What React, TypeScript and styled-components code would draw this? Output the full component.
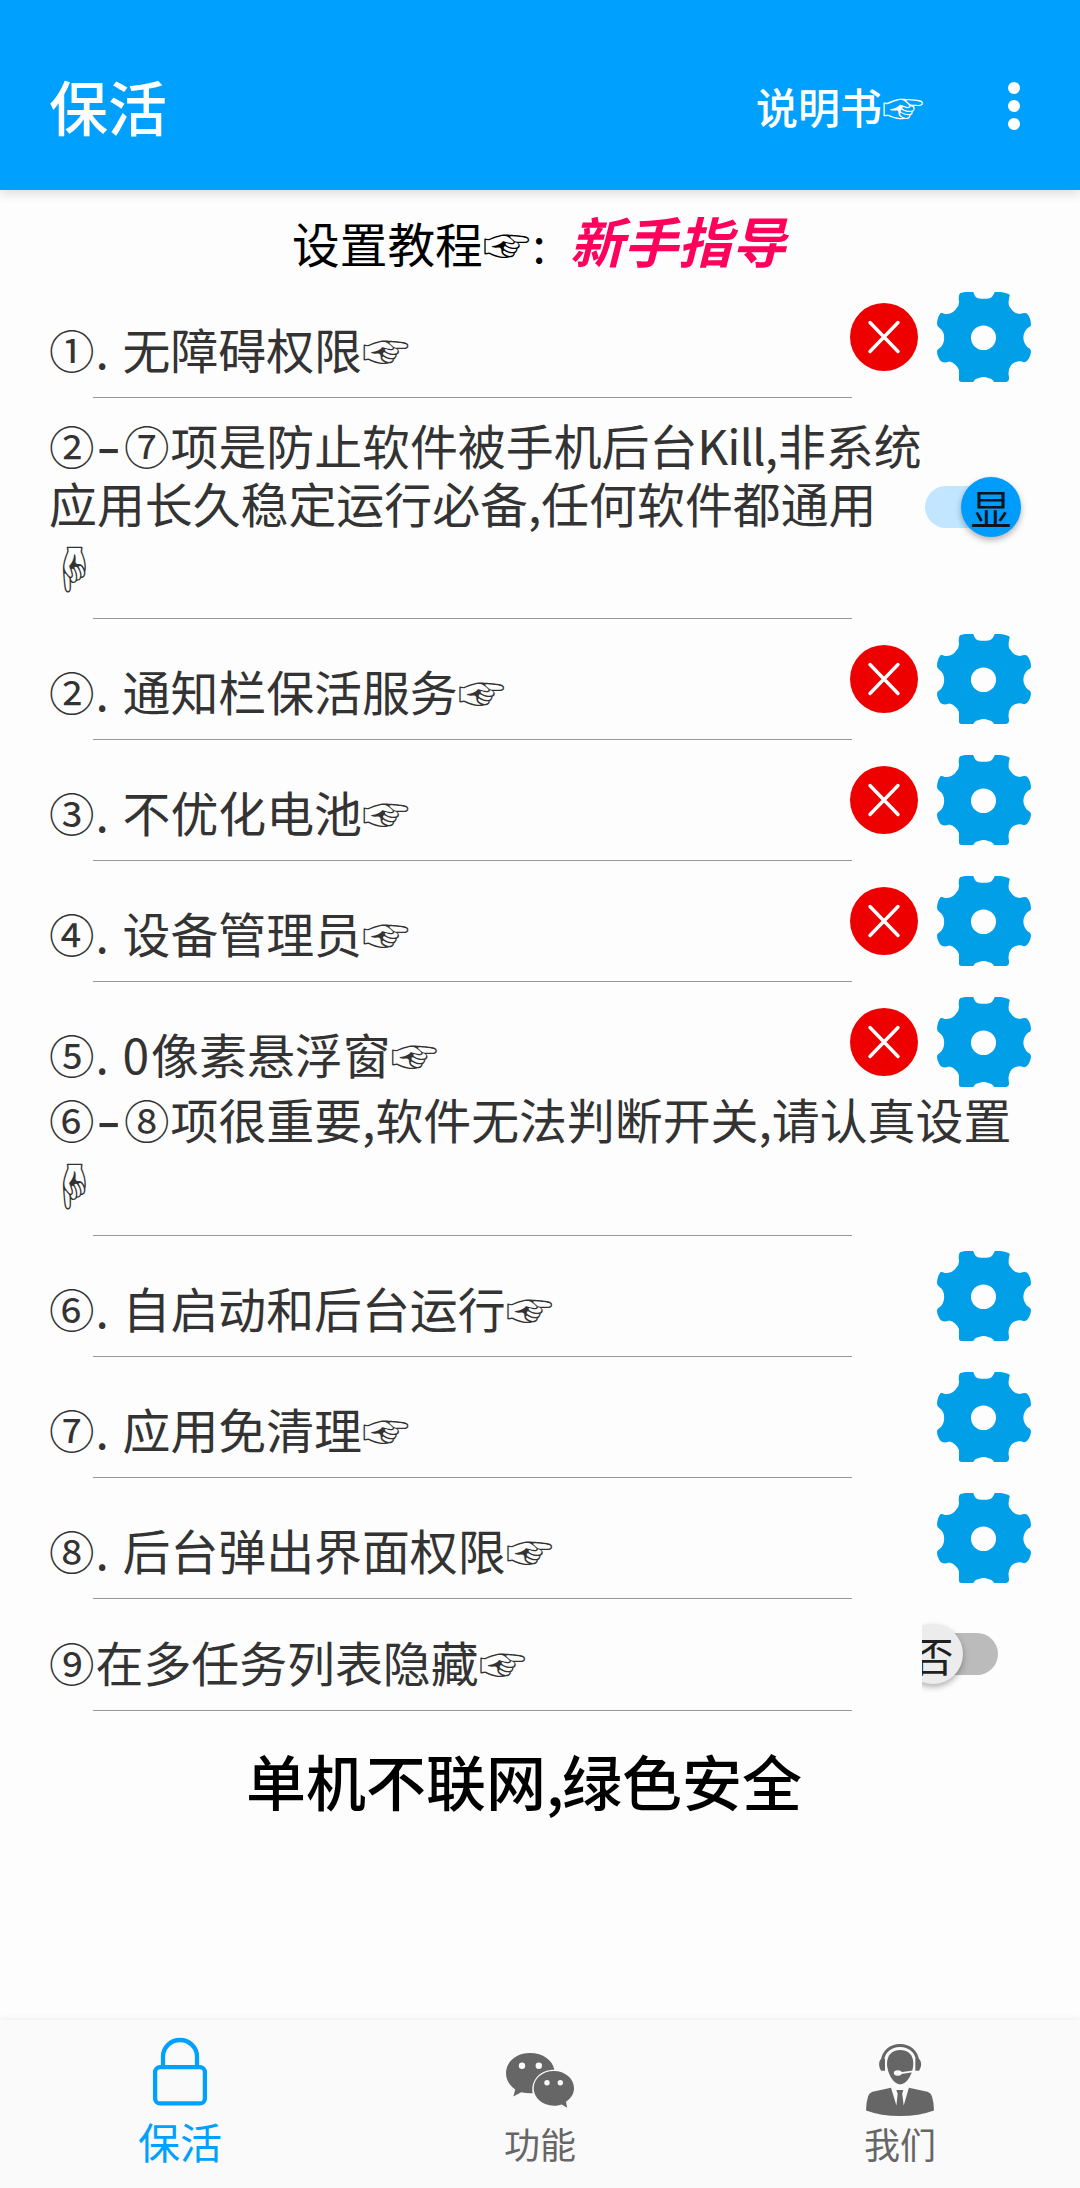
import React from "react";
import styled, { createGlobalStyle } from "styled-components";

const sans = `"Noto Sans CJK SC", "DejaVu Sans", sans-serif`;

const Global = createGlobalStyle`
  * { box-sizing: border-box; }
  body { margin: 0; background: #fdfdfd; font-family: ${sans}; }
`;

const Screen = styled.div`
  display: flex;
  flex-direction: column;
  width: 1080px;
  height: 2188px;
  background: #fdfdfd;
  overflow: hidden;
`;

const Header = styled.header`
  flex: none;
  display: flex;
  align-items: center;
  height: 190px;
  padding: 22px 60px 0 49px;
  background: #00a0ff;
  color: #fff;
  box-shadow: 0 4px 10px rgba(0, 0, 0, 0.12);
`;

const Title = styled.h1`
  flex: 1;
  margin: 0;
  font-size: 59px;
  font-weight: 500;
  line-height: 80px;
`;

const Manual = styled.span`
  display: flex;
  align-items: baseline;
  font-size: 42px;
  font-weight: 500;
  line-height: 60px;
  margin-right: 84px;
`;

const Dots = styled.div`
  display: flex;
  flex-direction: column;
  gap: 6px;
  width: 12px;
`;

const Dot = styled.i`
  width: 12px;
  height: 12px;
  border-radius: 50%;
  background: #fff;
`;

const HandBox = styled.span<{ $size: number }>`
  display: inline-block;
  width: ${(p) => p.$size}px;
  font-family: "Noto Sans CJK JP", "DejaVu Sans", sans-serif;
  font-weight: 400;
  font-size: ${(p) => p.$size}px;
  line-height: 1;
  white-space: nowrap;
`;

const Guide = styled.div`
  flex: none;
  display: flex;
  align-items: baseline;
  height: 87px;
  padding: 15px 0 0 292px;
  font-size: 47.7px;
  line-height: 70px;
  color: #000;
`;

const Colon = styled.span`
  padding-left: 2px;
`;

const GuideLink = styled.b`
  margin-left: 24px;
  color: #ff005c;
  font-size: 54px;
  font-style: italic;
  font-weight: 700;
  line-height: 70px;
`;

const Item = styled.section<{ $h: number; $line?: boolean }>`
  flex: none;
  display: grid;
  grid-template-columns: minmax(0, 1fr) 68px 95px;
  column-gap: 18px;
  height: ${(p) => p.$h}px;
  padding: 0 49px;
  background: ${(p) =>
    p.$line === false ? "none" : "linear-gradient(#999, #999) 93px 100% / 759px 1px no-repeat"};
`;

const Label = styled.div<{ $top: number }>`
  padding-top: ${(p) => p.$top}px;
  color: #333;
  font-size: 47.9px;
  line-height: 57px;
  white-space: nowrap;
`;

const Num = styled.span`
  display: inline-block;
  width: 46.5px;
  font-size: 45.5px;
`;

const Stop = styled.span`
  display: inline-block;
  width: 27px;
`;

const Dash = styled.span`
  display: inline-flex;
  justify-content: center;
  width: 28.5px;
  font-weight: 500;
  transform: translateX(-1.5px) scaleX(1.45);
`;

const Latin = styled.span<{ $gap: number }>`
  letter-spacing: ${(p) => p.$gap}px;
`;

const Slot = styled.div`
  padding-top: 15px;
  height: 105px;
  display: flex;
  align-items: center;
`;

const Note = styled.div`
  flex: none;
  height: 146px;
  margin-top: -8px;
  padding: 0 49px;
  color: #333;
  font-size: 47.9px;
  line-height: 57px;
  white-space: nowrap;
  background: linear-gradient(#999, #999) 93px 100% / 759px 1px no-repeat;
`;

const HandLine = styled.div`
  line-height: 73px;
`;

const SwitchBox = styled.div<{ $on: boolean; $top: number }>`
  grid-column: 2 / 4;
  justify-self: end;
  display: flex;
  align-items: center;
  justify-content: ${(p) => (p.$on ? "flex-end" : "flex-start")};
  width: 109px;
  height: 78px;
  margin-top: ${(p) => p.$top}px;
  overflow: hidden;
`;

const Track = styled.div<{ $on: boolean }>`
  display: flex;
  align-items: center;
  justify-content: ${(p) => (p.$on ? "flex-end" : "flex-start")};
  width: ${(p) => (p.$on ? 86 : 76)}px;
  height: 42px;
  margin-right: ${(p) => (p.$on ? 20 : 0)}px;
  border-radius: ${(p) => (p.$on ? "21px" : "0 21px 21px 0")};
  background: ${(p) => (p.$on ? "#c2e6ff" : "#bbb")};
`;

const Thumb = styled.div<{ $on: boolean }>`
  flex: none;
  display: flex;
  align-items: center;
  justify-content: center;
  width: 60px;
  height: 60px;
  margin: 0 ${(p) => (p.$on ? "-10px" : "0")} 0 ${(p) => (p.$on ? "0" : "-19px")};
  border-radius: 50%;
  background: ${(p) => (p.$on ? "#009cfb" : "#ececec")};
  box-shadow: 0 3px 6px rgba(0, 0, 0, 0.3);
  color: ${(p) => (p.$on ? "#06151f" : "#1f1f1f")};
  font-size: 41px;
  line-height: 58px;
`;

const Slogan = styled.div`
  flex: 1;
  padding: 25px 0 0 246px;
  color: #000;
  font-size: 60px;
  font-weight: 500;
  line-height: 88px;
`;

const Nav = styled.nav`
  flex: none;
  display: grid;
  grid-template-columns: repeat(3, 1fr);
  height: 168px;
  background: #fafafa;
  box-shadow: 0 -1px 6px rgba(0, 0, 0, 0.07);
`;

const Tab = styled.div<{ $active?: boolean }>`
  display: flex;
  flex-direction: column;
  align-items: center;
  padding-top: 16px;
  color: ${(p) => (p.$active ? "#00a0ff" : "#666")};
  font-size: ${(p) => (p.$active ? 42 : 36)}px;
`;

const TabText = styled.span<{ $active?: boolean }>`
  line-height: 60px;
  margin-top: ${(p) => (p.$active ? -5 : -3)}px;
`;

const Hand = ({ size = 47.7, down = false }: { size?: number; down?: boolean }) => (
  <HandBox $size={size}>{down ? "☟" : "☞"}</HandBox>
);

const Cross = () => (
  <svg width="68" height="68" viewBox="0 0 68 68">
    <circle cx="34" cy="34" r="34" fill="#ee0000" />
    <path d="M20 19.5 48 48.5M48 19.5 20 48.5" stroke="#fff" strokeWidth="3.4" strokeLinecap="round" />
  </svg>
);

const Gear = () => (
  <svg width="95" height="90" viewBox="0 0 93 90" preserveAspectRatio="none">
    <path
      fill="#009fe8"
      fillRule="evenodd"
      d="M24 1Q30 -.8 36.500 0Q38 5.500 41 6.300Q47 7.300 52.500 6.300Q55.500 5.500 57.500 0Q64 -.8 71 2Q73 3 71.700 5Q70 14 73 16Q76 21.500 82 22Q87 20.500 89 21.500Q93 26 93 33Q92.500 35.300 90 35.800Q85.500 40 85.500 46Q86 52 90 55.500Q93 56.500 93 60Q92 66 89 69Q87 71 84 69.500Q76 68.500 73 74Q70 78 71.500 86Q72 89 69 90H57Q55 86.500 51 86Q47 84 42 86Q38 86.500 36.500 90H24.500Q22 89.500 22.500 87V78Q19.500 71 13 69.500Q7 71.500 4.500 69Q1 64 1 59.500Q1 57.500 3 56.500Q8 53 8 46Q8 39 3.500 36Q1 34.500 1 32Q1 26 4.500 21Q6 20.500 8.500 22Q16 22.500 19.500 17Q23.500 13 22.300 8Q22 2 24 1ZM46.500 33.500A12.300 12.300 0 1 0 46.500 58.100A12.300 12.300 0 1 0 46.500 33.500Z"
    />
  </svg>
);

const Lock = () => (
  <svg width="56" height="80" viewBox="0 0 56 80" fill="none" stroke="#00a0ff" strokeWidth="4.300">
    <rect x="3.100" y="31.200" width="49.800" height="36.200" rx="5" />
    <path d="M11 31V20.500a17 16.500 0 0 1 34 0V31" />
  </svg>
);

const Chat = () => (
  <svg width="70" height="80" viewBox="0 0 70 80">
    <path
      fill="#666"
      d="M25 17C38 17 48 24.500 49.300 33.800C36 33.500 25.500 43.500 27.600 57.200C24 57.500 20 57 16.300 56.200L8.300 60.500L10.300 53.500C4.500 49.500 1 44 1 37C1 25.500 11.500 17 25 17Z"
    />
    <path
      fill="#666"
      d="M48.900 34.900C60 34.900 69 42.500 69 52C69 58 65.800 62.500 61 65.800L62.200 71.700L56.700 68.500C54 69.400 51.500 69.700 48.900 69.700C37.500 69.700 28.700 62 28.700 52.300C28.700 42.500 37.500 34.900 48.900 34.900Z"
    />
    <g fill="#fafafa">
      <circle cx="17" cy="29.800" r="3.200" />
      <circle cx="33.800" cy="29.800" r="3.200" />
      <circle cx="42" cy="46.700" r="2.700" />
      <circle cx="55.300" cy="46.700" r="2.700" />
    </g>
  </svg>
);

const Agent = () => (
  <svg width="70" height="80" viewBox="0 0 70 80">
    <path
      fill="#666"
      d="M35.200 14C43.500 14 48.300 19 48.300 28C48 37.500 42 48.300 35.200 48.300S22.400 37.500 22 28C22 19 27 14 35.200 14Z"
    />
    <path fill="none" stroke="#666" strokeWidth="3" d="M17.300 25C18.500 15.500 25.500 9.500 35 9.500S51.500 15.500 52.700 25" />
    <path
      fill="#666"
      d="M16.500 22.500H20L20 34.700H16.200C13.600 31 13.600 26.500 15.400 23.800ZM53.500 22.500H50.400L50.300 34.700H54C56.700 31 56.700 26.500 54.800 23.800Z"
    />
    <path stroke="#fafafa" strokeWidth="1.800" d="M34 37.400 48 35.300" />
    <ellipse cx="32.800" cy="37" rx="4" ry="2.800" fill="#fafafa" />
    <path
      fill="#666"
      d="M26 51.700L31.400 69.500L32.700 57.800L31.300 54H38.300L37.200 57.800L38.700 69.500L43.900 51.700L62.500 55.800Q66 57 67 60.500Q69 67 69 74.500Q54 80 35 80Q16 80 1 74.500Q1 67 3 60.500Q4 57 7.500 55.800Z"
    />
  </svg>
);

type RowProps = {
  n: string;
  text: React.ReactNode;
  cross?: boolean;
  h?: number;
  line?: boolean;
};

const Row = ({ n, text, cross, h = 121, line }: RowProps) => (
  <Item $h={h} $line={line}>
    <Label $top={43}>
      <Num>{n}</Num>
      <Stop>.</Stop>
      {text}
      <Hand />
    </Label>
    <Slot>{cross && <Cross />}</Slot>
    <Slot>
      <Gear />
    </Slot>
  </Item>
);

const Switch = ({ on, text, top }: { on: boolean; text: string; top: number }) => (
  <SwitchBox $on={on} $top={top}>
    <Track $on={on}>
      <Thumb $on={on}>{text}</Thumb>
    </Track>
  </SwitchBox>
);

export default function App() {
  return (
    <Screen>
      <Global />
      <Header>
        <Title>保活</Title>
        <Manual>
          说明书
          <Hand size={42} />
        </Manual>
        <Dots>
          <Dot />
          <Dot />
          <Dot />
        </Dots>
      </Header>
      <Guide>
        设置教程
        <Hand />
        <Colon>:</Colon>
        <GuideLink>新手指导</GuideLink>
      </Guide>
      <Row n="①" text="无障碍权限" cross />
      <Item $h={221}>
        <Label $top={18}>
          <Num>②</Num>
          <Dash>-</Dash>
          <Num>⑦</Num>
          项是防止软件被手机后台<Latin $gap={-1}>Kill</Latin>,非系统
          <br />
          应用长久稳定运行必备,任何软件都通用
          <HandLine>
            <Hand down />
          </HandLine>
        </Label>
        <Switch on text="显" top={70} />
      </Item>
      <Row n="②" text="通知栏保活服务" cross />
      <Row n="③" text="不优化电池" cross />
      <Row n="④" text="设备管理员" cross />
      <Row
        n="⑤"
        text={
          <>
            <Latin $gap={2}>0</Latin>像素悬浮窗
          </>
        }
        cross
        h={116}
        line={false}
      />
      <Note>
        <Num>⑥</Num>
        <Dash>-</Dash>
        <Num>⑧</Num>
        项很重要,软件无法判断开关,请认真设置
        <HandLine>
          <Hand down />
        </HandLine>
      </Note>
      <Row n="⑥" text="自启动和后台运行" />
      <Row n="⑦" text="应用免清理" />
      <Row n="⑧" text="后台弹出界面权限" />
      <Item $h={112}>
        <Label $top={34}>
          <Num>⑨</Num>
          在多任务列表隐藏
          <Hand />
        </Label>
        <Switch on={false} text="否" top={16} />
      </Item>
      <Slogan>
        单机不联网<Latin $gap={-2}>,</Latin>绿色安全
      </Slogan>
      <Nav>
        <Tab $active>
          <Lock />
          <TabText $active>保活</TabText>
        </Tab>
        <Tab>
          <Chat />
          <TabText>功能</TabText>
        </Tab>
        <Tab>
          <Agent />
          <TabText>我们</TabText>
        </Tab>
      </Nav>
    </Screen>
  );
}
